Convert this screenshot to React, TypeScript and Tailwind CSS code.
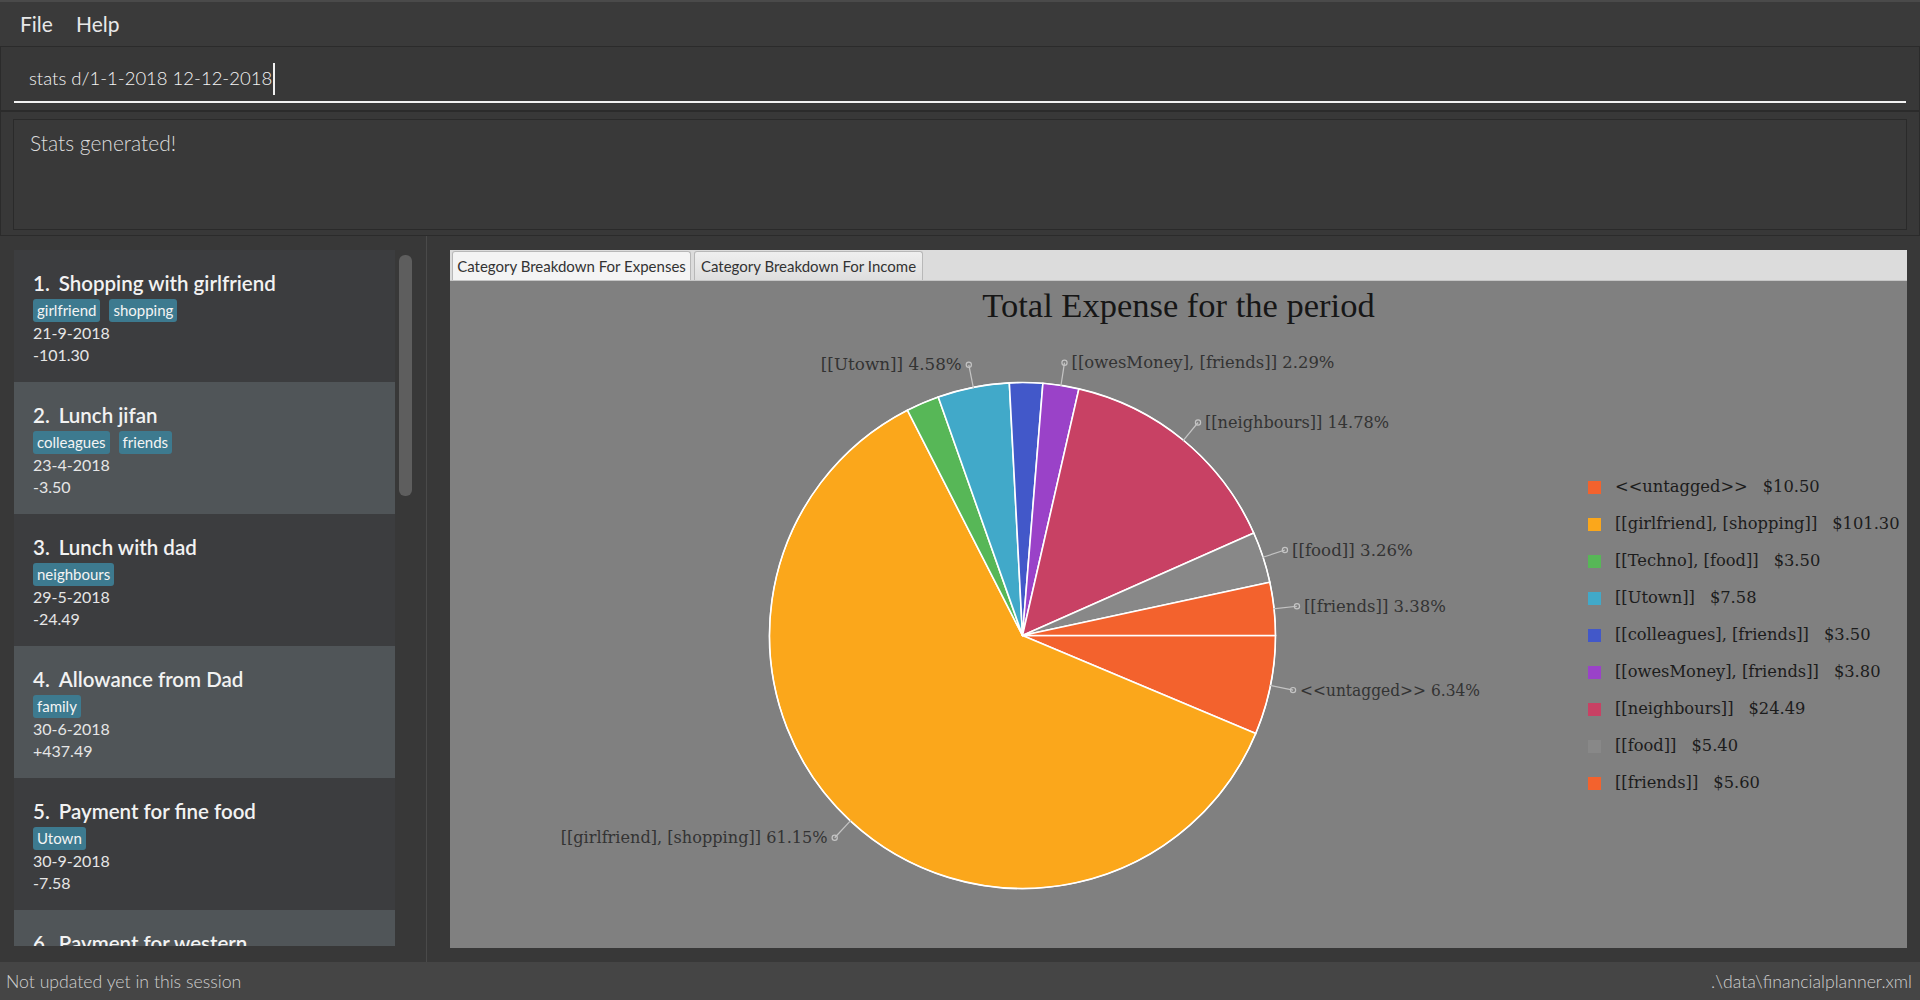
import React from "react";

type Entry = { no: number; title: string; tags: string[]; date: string; amount: string };

const entries: Entry[] = [
  { no: 1, title: "Shopping with girlfriend", tags: ["girlfriend", "shopping"], date: "21-9-2018", amount: "-101.30" },
  { no: 2, title: "Lunch jifan", tags: ["colleagues", "friends"], date: "23-4-2018", amount: "-3.50" },
  { no: 3, title: "Lunch with dad", tags: ["neighbours"], date: "29-5-2018", amount: "-24.49" },
  { no: 4, title: "Allowance from Dad", tags: ["family"], date: "30-6-2018", amount: "+437.49" },
  { no: 5, title: "Payment for fine food", tags: ["Utown"], date: "30-9-2018", amount: "-7.58" },
  { no: 6, title: "Payment for western", tags: [], date: "", amount: "" },
];

type Slice = { name: string; value: number; color: string; label: boolean };

const slices: Slice[] = [
  { name: "<<untagged>>", value: 10.5, color: "#f3622d", label: true },
  { name: "[[girlfriend], [shopping]]", value: 101.3, color: "#fba71b", label: true },
  { name: "[[Techno], [food]]", value: 3.5, color: "#57b757", label: false },
  { name: "[[Utown]]", value: 7.58, color: "#41a9c9", label: true },
  { name: "[[colleagues], [friends]]", value: 3.5, color: "#4258c9", label: false },
  { name: "[[owesMoney], [friends]]", value: 3.8, color: "#9a42c8", label: true },
  { name: "[[neighbours]]", value: 24.49, color: "#c84164", label: true },
  { name: "[[food]]", value: 5.4, color: "#888888", label: true },
  { name: "[[friends]]", value: 5.6, color: "#f3622d", label: true },
];

function Card({ e }: { e: Entry }) {
  const alt = e.no % 2 === 0;
  return (
    <div className={`h-[132px] shrink-0 pl-[19px] pt-[20px] ${alt ? "bg-[#505558]" : "bg-[#3c3d3f]"}`}>
      <div className="h-[26px] leading-[26px] text-[20.5px] font-semibold text-[#f2f2f2] whitespace-nowrap">
        {e.no}.<span className="ml-[9px]">{e.title}</span>
      </div>
      {e.tags.length > 0 && (
        <div className="mt-[3px] flex gap-[9px] h-[23px]">
          {e.tags.map((t) => (
            <span key={t} className="h-[23px] leading-[23px] px-[4px] rounded-[3px] bg-[#3d7a8f] text-[15px] text-[#f4f4f4]">
              {t}
            </span>
          ))}
        </div>
      )}
      {e.date && <div className="h-[22px] leading-[22px] text-[16px] text-[#e6e6e6]">{e.date}</div>}
      {e.amount && <div className="h-[22px] leading-[22px] text-[16px] text-[#e6e6e6]">{e.amount}</div>}
    </div>
  );
}

function PieChart() {
  const cx = 572.5;
  const cy = 304.5;
  const r = 253;
  const total = slices.reduce((s, x) => s + x.value, 0);
  let acc = 0;
  const parts = slices.map((s) => {
    const a0 = (acc / total) * Math.PI * 2;
    acc += s.value;
    const a1 = (acc / total) * Math.PI * 2;
    const x0 = cx + r * Math.cos(a0);
    const y0 = cy + r * Math.sin(a0);
    const x1 = cx + r * Math.cos(a1);
    const y1 = cy + r * Math.sin(a1);
    const large = a1 - a0 > Math.PI ? 1 : 0;
    const d = `M ${cx} ${cy} L ${x0} ${y0} A ${r} ${r} 0 ${large} 1 ${x1} ${y1} Z`;
    const mid = (a0 + a1) / 2;
    const pct = ((s.value / total) * 100).toFixed(2) + "%";
    return { s, d, mid, pct };
  });
  const widths: Record<string, number> = {
    "<<untagged>>": 180,
    "[[girlfriend], [shopping]]": 267,
    "[[Utown]]": 141,
    "[[owesMoney], [friends]]": 263,
    "[[neighbours]]": 184,
    "[[food]]": 121,
    "[[friends]]": 142,
  };
  return (
    <svg width="1110" height="617" viewBox="0 0 1110 617" className="shrink-0">
      {parts.map((p, i) => (
        <path key={i} d={p.d} fill={p.s.color} stroke="#ffffff" strokeWidth="1.6" strokeLinejoin="round" />
      ))}
      <circle cx={cx} cy={cy} r={r} fill="none" stroke="#ffffff" strokeWidth="1.2" />
      {parts
        .filter((p) => p.s.label)
        .map((p, i) => {
          const c = Math.cos(p.mid);
          const sn = Math.sin(p.mid);
          const lx0 = cx + (r - 1) * c;
          const ly0 = cy + (r - 1) * sn;
          const lx1 = cx + 276 * c;
          const ly1 = cy + 276 * sn;
          const right = c > 0;
          const text = `${p.s.name} ${p.pct}`;
          return (
            <g key={i}>
              <line x1={lx0} y1={ly0} x2={lx1} y2={ly1} stroke="#c4c4c4" strokeWidth="1.2" />
              <circle cx={lx1} cy={ly1} r="2.6" fill="none" stroke="#c4c4c4" strokeWidth="1.2" />
              <text
                x={right ? lx1 + 7 : lx1 - 7}
                y={ly1 + 5.5}
                textAnchor={right ? "start" : "end"}
                fill="#333333"
                fontSize="16.5"
                fontFamily="'DejaVu Serif', serif"
                textLength={widths[p.s.name]}
                lengthAdjust="spacingAndGlyphs"
              >
                {text}
              </text>
            </g>
          );
        })}
    </svg>
  );
}

export default function App() {
  return (
    <div className="w-[1920px] h-[1000px] overflow-hidden bg-[#383838] flex flex-col font-['Lato','Open_Sans',sans-serif]">
      {/* menu bar */}
      <div className="h-[46px] shrink-0 bg-[#3a3a3a] border-t-2 border-[#4a4a4a] flex items-center pl-[20px] gap-[23px] text-[21px] text-[#e8e8e8]">
        <span>File</span>
        <span>Help</span>
      </div>
      {/* command box */}
      <div className="h-[65px] shrink-0 border border-[#2b2b2b] bg-[#383838] px-[13px] pt-[16px]">
        <div className="h-[40px] border-b-2 border-[#f2f2f2] pl-[15px] flex items-start">
          <span className="text-[18.5px] leading-[30px] text-[#f4f4f4] font-light">stats d/1-1-2018 12-12-2018</span>
          <span className="ml-[1px] mt-[0px] w-[2px] h-[32px] bg-[#f0f0f0]" />
        </div>
      </div>
      {/* result display */}
      <div className="h-[125px] shrink-0 border border-[#2b2b2b] bg-[#383838] px-[12px] pt-[7px] pb-[6px]">
        <div className="h-[111px] border border-[#2a2a2a] bg-[#393939] pl-[16px] pt-[8px]">
          <span className="text-[21px] leading-[30px] text-[#dcdcdc] font-light">Stats generated!</span>
        </div>
      </div>
      {/* main */}
      <div className="flex-1 flex min-h-0">
        <div className="w-[427px] shrink-0 border-r border-[#4a4a4a] pl-[14px] pt-[14px] pb-[16px] flex gap-[4px]">
          <div className="w-[381px] h-[696px] overflow-hidden flex flex-col">
            {entries.map((e) => (
              <Card key={e.no} e={e} />
            ))}
          </div>
          <div className="w-[13px] pt-[5px]">
            <div className="h-[241px] rounded-[6px] bg-[#5e5e5e]" />
          </div>
        </div>
        <div className="flex-1 pl-[23px] pt-[14px] pr-[13px] pb-[14px]">
          <div className="w-[1457px] h-[698px] flex flex-col">
            <div className="h-[31px] shrink-0 bg-[#dcdcdc] border-b border-[#c6c6c6] flex items-end pl-[2px] gap-[3px]">
              <div className="h-[29px] w-[239px] bg-[#f4f4f4] border border-b-0 border-[#b8b8b8] rounded-t-[3px] flex items-center justify-center text-[15px] text-[#333333]">
                Category Breakdown For Expenses
              </div>
              <div className="h-[29px] w-[229px] bg-gradient-to-b from-[#efefef] to-[#dedede] border border-b-0 border-[#b8b8b8] rounded-t-[3px] flex items-center justify-center text-[15px] text-[#333333]">
                Category Breakdown For Income
              </div>
            </div>
            <div className="flex-1 bg-[#808080] flex flex-col">
              <div className="h-[50px] shrink-0 flex items-center justify-center text-[34.5px] text-[#161616] font-['Liberation_Serif',serif]">
                Total Expense for the period
              </div>
              <div className="flex-1 flex items-center">
                <PieChart />
                <div className="ml-[28px] pb-[9px] flex flex-col font-['DejaVu_Serif',serif] text-[16.3px] text-[#1c1c1c]">
                  {slices.map((s) => (
                    <div key={s.name} className="h-[37px] flex items-center whitespace-nowrap">
                      <span className="w-[13px] h-[13px] mr-[14px]" style={{ backgroundColor: s.color }} />
                      <span>{s.name}</span>
                      <span className="ml-[15px]">${s.value.toFixed(2)}</span>
                    </div>
                  ))}
                </div>
              </div>
            </div>
          </div>
        </div>
      </div>
      {/* status bar */}
      <div className="h-[38px] shrink-0 bg-[#454545] flex items-center justify-between pl-[6px] pr-[8px] pt-[3px] text-[17.7px] text-[#cfcfcf] font-light">
        <span>Not updated yet in this session</span>
        <span>.\data\financialplanner.xml</span>
      </div>
    </div>
  );
}
